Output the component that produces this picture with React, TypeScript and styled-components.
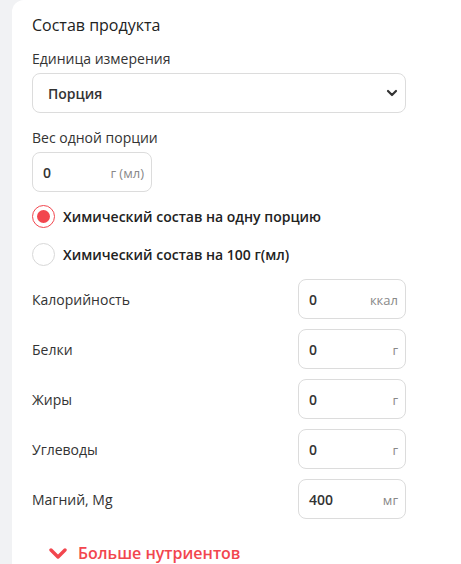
import styled, { createGlobalStyle } from "styled-components";

const Global = createGlobalStyle`
  html, body { margin: 0; padding: 0; background: #f1f2f4; }
  body { font-family: "Open Sans", "Noto Sans", sans-serif; color: #222; }
`;

const nutrients = [
  { label: "Калорийность", value: "0", unit: "ккал" },
  { label: "Белки", value: "0", unit: "г" },
  { label: "Жиры", value: "0", unit: "г" },
  { label: "Углеводы", value: "0", unit: "г" },
  { label: "Магний, Mg", value: "400", unit: "мг" },
];

export default function App() {
  return (
    <>
      <Global />
      <Page>
        <Card>
          <Title>Состав продукта</Title>
          <Field top={12}>
            <Label>Единица измерения</Label>
            <Select>
              <span>Порция</span>
              <svg width="12" height="8" viewBox="0 0 12 8">
                <path d="M2 2l4 4 4-4" fill="none" stroke="#333" strokeWidth="2.2" strokeLinecap="round" strokeLinejoin="round" />
              </svg>
            </Select>
          </Field>
          <Field top={15}>
            <Label>Вес одной порции</Label>
            <UnitInput width={120}>
              <Value>0</Value>
              <Unit>г (мл)</Unit>
            </UnitInput>
          </Field>
          <Radios>
            <RadioRow>
              <Radio checked />
              <RadioText>Химический состав на одну порцию</RadioText>
            </RadioRow>
            <RadioRow>
              <Radio />
              <RadioText>Химический состав на 100 г(мл)</RadioText>
            </RadioRow>
          </Radios>
          <Rows>
            {nutrients.map((n) => (
              <Row key={n.label}>
                <RowLabel>{n.label}</RowLabel>
                <UnitInput width={108}>
                  <Value>{n.value}</Value>
                  <Unit>{n.unit}</Unit>
                </UnitInput>
              </Row>
            ))}
          </Rows>
          <More>
            <svg width="20" height="12" viewBox="0 0 20 12">
              <path d="M3 3l7 7 7-7" fill="none" stroke="#f2464e" strokeWidth="3.4" strokeLinecap="round" strokeLinejoin="round" />
            </svg>
            Больше нутриентов
          </More>
        </Card>
      </Page>
    </>
  );
}

const Page = styled.div`
  display: flex;
  padding-left: 12px;
  height: 564px;
  overflow: hidden;
`;

const Card = styled.div`
  flex: 1;
  background: #fff;
  border-top-left-radius: 12px;
  padding: 13px 55px 0 20px;
  display: flex;
  flex-direction: column;
`;

const Title = styled.div`
  font-size: 16px;
  line-height: 24px;
  color: #222;
`;

const Field = styled.div<{ top: number }>`
  display: flex;
  flex-direction: column;
  align-items: flex-start;
  margin-top: ${({ top }) => top}px;
`;

const Label = styled.div`
  font-size: 14px;
  line-height: 20px;
  color: #333;
  margin-bottom: 4px;
`;

const Select = styled.div`
  box-sizing: border-box;
  width: 374px;
  height: 40px;
  border: 1px solid #dcdcdc;
  border-radius: 8px;
  display: flex;
  align-items: center;
  justify-content: space-between;
  padding: 0 7px 0 15px;
  font-size: 14px;
  font-weight: 600;
  color: #333;
`;

const UnitInput = styled.div<{ width: number }>`
  box-sizing: border-box;
  width: ${({ width }) => width}px;
  height: 40px;
  border: 1px solid #dcdcdc;
  border-radius: 8px;
  display: flex;
  align-items: center;
  justify-content: space-between;
  padding: 0 7px 0 10px;
`;

const Value = styled.span`
  font-size: 14px;
  font-weight: 600;
  color: #333;
`;

const Unit = styled.span`
  font-size: 13px;
  color: #888;
  padding-top: 2px;
`;

const Radios = styled.div`
  display: flex;
  flex-direction: column;
  gap: 15px;
  margin-top: 13px;
`;

const RadioRow = styled.div`
  display: flex;
  align-items: center;
  gap: 8px;
`;

const Radio = styled.div<{ checked?: boolean }>`
  box-sizing: border-box;
  width: 23px;
  height: 23px;
  border-radius: 50%;
  border: 1px solid ${({ checked }) => (checked ? "#f2464e" : "#d8d8d8")};
  display: flex;
  align-items: center;
  justify-content: center;
  &::after {
    content: "";
    width: 13px;
    height: 13px;
    border-radius: 50%;
    background: ${({ checked }) => (checked ? "#f2464e" : "transparent")};
  }
`;

const RadioText = styled.span`
  font-size: 14px;
  font-weight: 600;
  color: #222;
`;

const Rows = styled.div`
  display: flex;
  flex-direction: column;
  gap: 10px;
  margin-top: 13px;
`;

const Row = styled.div`
  display: flex;
  align-items: center;
  justify-content: space-between;
`;

const RowLabel = styled.span`
  font-size: 14px;
  color: #333;
`;

const More = styled.div`
  display: flex;
  align-items: center;
  gap: 10px;
  margin-top: 23px;
  padding-left: 16px;
  font-size: 16px;
  font-weight: 600;
  color: #f2464e;
`;
